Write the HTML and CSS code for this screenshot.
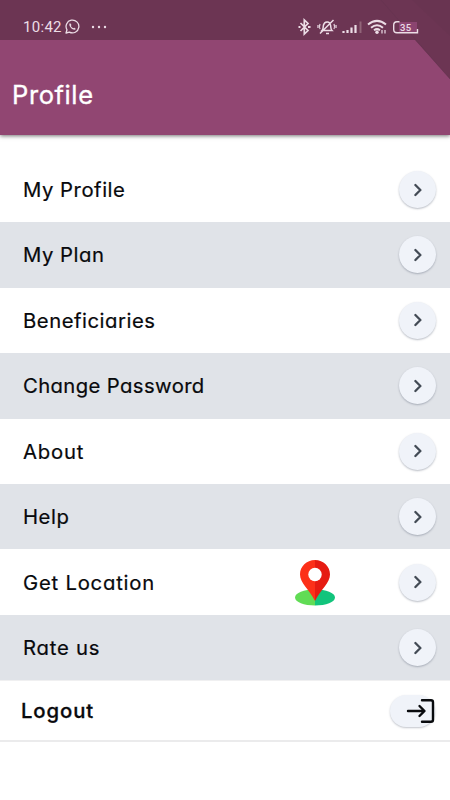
FILE: index.html
```html
<!DOCTYPE html>
<html lang="en">
<head>
<meta charset="utf-8">
<title>Profile</title>
<link rel="stylesheet" href="styles.css">
</head>
<body>
<svg class="defs" width="0" height="0"><defs><symbol id="chevron" viewBox="0 0 8 14"><path d="M1.4 2 L6.4 7 L1.4 12" fill="none" stroke="#434b55" stroke-width="2.3" stroke-linecap="round" stroke-linejoin="round"/></symbol></defs></svg>
<header class="header">
  <svg class="fold" width="100" height="80" viewBox="0 0 100 80"><path d="M26 0H100V79L65 40Z" fill="#6c3553"/><path d="M31 0L66 40L100 79" fill="none" stroke="#643450" stroke-width="1" opacity=".5"/><path d="M62 0L100 36V0Z" fill="#683450" opacity=".6"/></svg>
  <div class="status">
    <span class="time">10:42</span>
    <svg class="whatsapp" width="15" height="15" viewBox="0 0 15 15"><path d="M1 14L2 10.8A6.4 6.4 0 1 1 4.4 13.1Z" fill="none" stroke="#ecdde6" stroke-width="1.3" stroke-linejoin="round"/><path d="M5 4.1C3.7 5.2 4.3 7.2 6 8.9S9.800 11.300 10.900 9.900L9.300 8.700L8.200 9.300C7.100 8.800 6.300 8 5.800 7L6.500 6Z" fill="#ecdde6"/></svg>
    <svg class="dots" width="16" height="4" viewBox="0 0 16 4" fill="#ecdde6"><circle cx="2" cy="2" r="1.200"/><circle cx="8" cy="2" r="1.200"/><circle cx="14" cy="2" r="1.200"/></svg>
    <svg class="system" width="124" height="18" viewBox="0 0 124 18" fill="none" stroke="#ecdde6">
      <path d="M4.500 5L12 12.500L8.300 16V2L12 5.500L4.500 13" stroke-width="1.700"/><path d="M2.500 9H4.500M12 9H14.500" stroke-width="2"/>
      <path d="M26 12.500C27.500 11 27 9 27.500 7Q28.200 4.300 31 4T34.500 7C35 9 34.500 11 36 12.500ZM30 15.500H33M24 15.500L37.500 2" stroke-width="1.500"/><path d="M24 6Q23 8.500 24 11M22 7V10M38 6Q39 8.500 38 11M40 7V10" stroke-width="1.200"/>
      <path d="M47.500 15V13M51.500 15V12M55.500 15V9.500M59.500 15V7" stroke-width="2.200"/><path d="M64.500 15V3.500" stroke="#916579" stroke-width="2"/>
      <path d="M72 6.500Q81 -.700 90 6.500M75 9.700Q81 4.800 87 9.700M78 12.300Q81 10 84 12.300" stroke-width="2"/><circle cx="81" cy="14.300" r="1.700" fill="#ecdde6" stroke="none"/><path d="M86 12V15.500M89 12V15.500" stroke-width="1.200"/>
      <rect x="103" y="4" width="18" height="10" fill="#8b4470" stroke="none"/><path d="M103.500 3.800H101Q97.700 3.800 97.700 7V11.500Q97.700 14.700 101 14.700H121.500V11" stroke-width="1.400"/><text class="battery" x="104" y="12.500">35</text>
    </svg>
  </div>
  <h1 class="title"><span>Profile</span></h1>
</header>
<main class="menu">
  <div class="row first"><span class="label">My Profile</span><span class="go"><svg class="chev"><use href="#chevron"/></svg></span></div>
  <div class="row shaded"><span class="label">My Plan</span><span class="go"><svg class="chev"><use href="#chevron"/></svg></span></div>
  <div class="row"><span class="label">Beneficiaries</span><span class="go"><svg class="chev"><use href="#chevron"/></svg></span></div>
  <div class="row shaded"><span class="label snug">Change Password</span><span class="go"><svg class="chev"><use href="#chevron"/></svg></span></div>
  <div class="row"><span class="label wide">About</span><span class="go"><svg class="chev"><use href="#chevron"/></svg></span></div>
  <div class="row shaded"><span class="label">Help</span><span class="go"><svg class="chev"><use href="#chevron"/></svg></span></div>
  <div class="row"><span class="label wide">Get Location</span>
    <svg class="pin" width="42" height="46" viewBox="0 0 42 46"><path d="M21 29.500C10 29.500 1 32.800 1 37.500S10 45.500 21 45.500Z" fill="#61dc55"/><path d="M21 29.500C32 29.500 41 32.800 41 37.500S32 45.500 21 45.500Z" fill="#12c47c"/><path d="M21 0C12.500 0 6 6.500 6 14.500C6 23 15 29 21 41Z" fill="#fc3019"/><path d="M21 0C29.500 0 36 6.500 36 14.500C36 23 27 29 21 41Z" fill="#e61b12"/><circle cx="21" cy="14.500" r="6.700" fill="#fff"/></svg>
    <span class="go"><svg class="chev"><use href="#chevron"/></svg></span></div>
  <div class="row shaded"><span class="label wide">Rate us</span><span class="go"><svg class="chev"><use href="#chevron"/></svg></span></div>
  <div class="row logout"><span class="label wide">Logout</span><span class="exit"><svg width="30" height="26" viewBox="0 0 30 26" fill="none" stroke="#090b0e" stroke-width="2.400" stroke-linecap="round" stroke-linejoin="round"><path d="M3 13H19M14.500 8L19.500 13L14.500 18M17 2.300H26Q28 2.300 28 4.300V21.700Q28 23.700 26 23.700H17"/></svg></span></div>
</main>
</body>
</html>
```
FILE: styles.css
```css
* { box-sizing: border-box; }
body { margin: 0; background: #fff; font-family: Inter, "Liberation Sans", sans-serif; font-feature-settings: "cv11"; color: #08090c; overflow: hidden; }
.defs { position: absolute; }
.header { position: relative; height: 134.500px; background: #914672; box-shadow: 0 1px 4px rgba(0,0,0,.55); }
.fold { position: absolute; right: 0; top: 0; width: 100px; height: 80px; }
.status { height: 40px; background: #6c3553; display: flex; align-items: center; padding: 13px 30px 0 23px; color: #ecdde6; }
.status svg { position: relative; flex: none; }
.time { font: 400 15px/18px Roboto, sans-serif; width: 41px; letter-spacing: .3px; }
.whatsapp { margin-left: 1px; }
.dots { margin-left: 11px; }
.system { margin-left: auto; }
.battery { font: 500 9.5px Roboto, sans-serif; fill: #ecdde6; stroke: none; letter-spacing: .4px; }
.title { margin: 0; padding: 39px 12px 0; color: #fff; font-size: 25.500px; line-height: 32px; font-weight: 400; letter-spacing: .6px; -webkit-text-stroke: .35px #fff; }
.menu { padding-top: 22.700px; }
.row { height: 65.450px; display: flex; align-items: center; padding: 0 14px 0 23px; }
.row.first { height: 65px; }
.shaded { background: #e0e3e8; }
.label { padding-top: 1px; font-size: 20.300px; line-height: 26px; font-weight: 400; letter-spacing: .53px; white-space: nowrap; -webkit-text-stroke: .2px #08090c; }
.label.snug { letter-spacing: .38px; }
.label.wide { letter-spacing: .78px; }
.go { margin-left: auto; width: 37px; height: 37px; border-radius: 50%; background: #f0f3f9; box-shadow: 0 1px 2px rgba(80,90,110,.4); display: flex; align-items: center; justify-content: center; padding-left: 1px; }
.chev { width: 8px; height: 14px; }
.pin { margin-left: auto; margin-top: 1px; }
.pin + .go { margin-left: 63px; }
.row.logout { height: 62px; border-top: 1px solid #f0f0f1; border-bottom: 2px solid #ebebec; padding: 0 15px 0 21px; }
.row.logout .label { font-weight: 500; letter-spacing: .9px; -webkit-text-stroke-width: .3px; }
.exit { margin-left: auto; width: 45px; height: 32px; border-radius: 16px; background: #f0f3f9; box-shadow: 0 1px 2px rgba(80,90,110,.35); display: flex; align-items: center; justify-content: flex-end; }
```
